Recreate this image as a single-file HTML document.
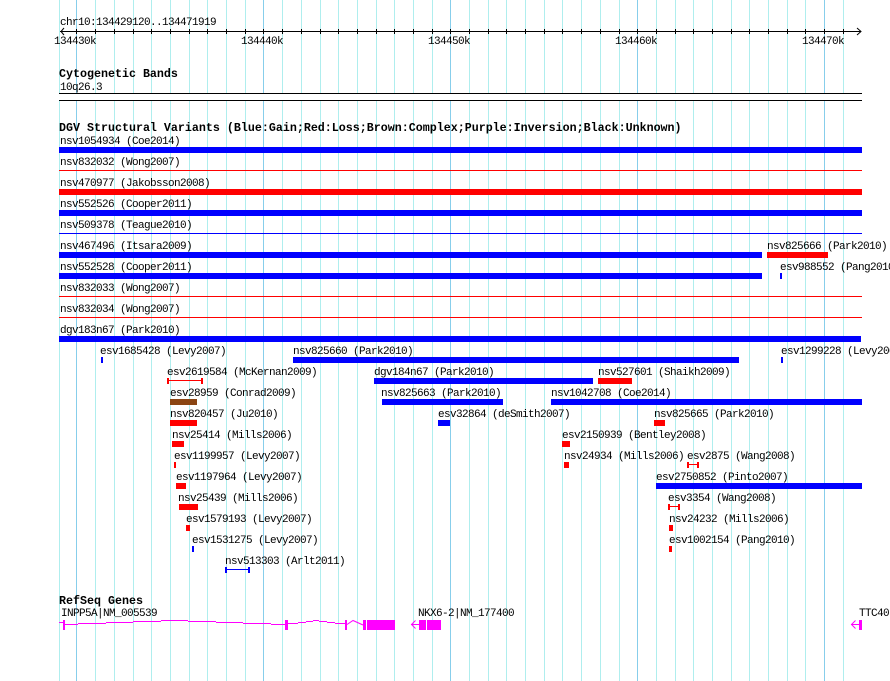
<!DOCTYPE html>
<html><head><meta charset="utf-8"><title>chr10</title>
<style>
html,body{margin:0;padding:0;background:#fff;width:890px;height:681px;overflow:hidden}
svg{display:block;position:absolute;left:0;top:0}
text{font-family:"Liberation Mono",monospace;font-size:11px;letter-spacing:-0.6px;fill:#000;white-space:pre}
text.b{font-weight:bold;font-size:11.67px;letter-spacing:0}
.bl{fill:#0000ff}.rd{fill:#ff0000}.br{fill:#8b4513}.mg{fill:#ff00ff}.k{fill:#000}
</style></head><body>
<svg width="890" height="681" viewBox="0 0 890 681" shape-rendering="crispEdges">
<path stroke="#afeeee" stroke-width="1" fill="none" d="M59.5 0V681M95.5 0V681M114.5 0V681M133.5 0V681M151.5 0V681M170.5 0V681M189.5 0V681M207.5 0V681M226.5 0V681M245.5 0V681M282.5 0V681M301.5 0V681M320.5 0V681M338.5 0V681M357.5 0V681M376.5 0V681M394.5 0V681M413.5 0V681M432.5 0V681M469.5 0V681M488.5 0V681M506.5 0V681M525.5 0V681M544.5 0V681M562.5 0V681M581.5 0V681M600.5 0V681M619.5 0V681M656.5 0V681M675.5 0V681M693.5 0V681M712.5 0V681M731.5 0V681M749.5 0V681M768.5 0V681M787.5 0V681M805.5 0V681M843.5 0V681"/>
<path stroke="#87ceeb" stroke-width="1" fill="none" d="M76.5 0V681M263.5 0V681M450.5 0V681M637.5 0V681M824.5 0V681"/>

<!-- ruler -->
<text x="60" y="25">chr10:134429120..134471919</text>
<path stroke="#000" stroke-width="1" fill="none" d="M60 31.5H861M76.5 29V34M95.5 29V34M114.5 29V34M133.5 29V34M151.5 29V34M170.5 29V34M189.5 29V34M207.5 29V34M226.5 29V34M245.5 29V34M263.5 29V34M282.5 29V34M301.5 29V34M320.5 29V34M338.5 29V34M357.5 29V34M376.5 29V34M394.5 29V34M413.5 29V34M432.5 29V34M450.5 29V34M469.5 29V34M488.5 29V34M506.5 29V34M525.5 29V34M544.5 29V34M562.5 29V34M581.5 29V34M600.5 29V34M619.5 29V34M637.5 29V34M656.5 29V34M675.5 29V34M693.5 29V34M712.5 29V34M731.5 29V34M749.5 29V34M768.5 29V34M787.5 29V34M805.5 29V34M824.5 29V34M843.5 29V34"/>
<path stroke="#000" stroke-width="1" fill="none" shape-rendering="auto" d="M64 28L61 31.5L64 35M857 28L861 31.5L857 35"/>
<text x="54" y="44">134430k</text>
<text x="241" y="44">134440k</text>
<text x="428" y="44">134450k</text>
<text x="615" y="44">134460k</text>
<text x="802" y="44">134470k</text>

<!-- cytobands -->
<text class="b" x="59" y="77">Cytogenetic Bands</text>
<text x="60" y="90">10q26.3</text>
<rect x="59" y="93" width="803" height="8" fill="#fff"/>
<rect class="k" x="59" y="93" width="803" height="1"/>
<rect class="k" x="59" y="100" width="803" height="1"/>

<!-- DGV -->
<text class="b" x="59" y="131">DGV Structural Variants (Blue:Gain;Red:Loss;Brown:Complex;Purple:Inversion;Black:Unknown)</text>

<text x="60" y="144">nsv1054934 (Coe2014)</text>
<rect class="bl" x="59" y="147" width="803" height="6"/>
<text x="60" y="165">nsv832032 (Wong2007)</text>
<rect class="rd" x="59" y="170" width="803" height="1"/>
<text x="60" y="186">nsv470977 (Jakobsson2008)</text>
<rect class="rd" x="59" y="189" width="803" height="6"/>
<text x="60" y="207">nsv552526 (Cooper2011)</text>
<rect class="bl" x="59" y="210" width="803" height="6"/>
<text x="60" y="228">nsv509378 (Teague2010)</text>
<rect class="bl" x="59" y="233" width="803" height="1"/>
<text x="60" y="249">nsv467496 (Itsara2009)</text>
<rect class="bl" x="59" y="252" width="703" height="6"/>
<text x="767" y="249">nsv825666 (Park2010)</text>
<rect class="rd" x="767" y="252" width="61" height="6"/>
<text x="60" y="270">nsv552528 (Cooper2011)</text>
<rect class="bl" x="59" y="273" width="703" height="6"/>
<text x="780" y="270">esv988552 (Pang2010)</text>
<rect class="bl" x="780" y="273" width="2" height="6"/>
<text x="60" y="291">nsv832033 (Wong2007)</text>
<rect class="rd" x="59" y="296" width="803" height="1"/>
<text x="60" y="312">nsv832034 (Wong2007)</text>
<rect class="rd" x="59" y="317" width="803" height="1"/>
<text x="60" y="333">dgv183n67 (Park2010)</text>
<rect class="bl" x="59" y="336" width="802" height="6"/>

<text x="100" y="354">esv1685428 (Levy2007)</text>
<rect class="bl" x="101" y="357" width="2" height="6"/>
<text x="293" y="354">nsv825660 (Park2010)</text>
<rect class="bl" x="293" y="357" width="446" height="6"/>
<text x="781" y="354">esv1299228 (Levy2007)</text>
<rect class="bl" x="781" y="357" width="2" height="6"/>

<text x="167" y="375">esv2619584 (McKernan2009)</text>
<rect class="rd" x="167" y="378" width="2" height="6"/>
<rect class="rd" x="167" y="380" width="36" height="1"/>
<rect class="rd" x="201" y="378" width="2" height="6"/>
<text x="374" y="375">dgv184n67 (Park2010)</text>
<rect class="bl" x="374" y="378" width="219" height="6"/>
<text x="598" y="375">nsv527601 (Shaikh2009)</text>
<rect class="rd" x="598" y="378" width="34" height="6"/>

<text x="170" y="396">esv28959 (Conrad2009)</text>
<rect class="br" x="170" y="399" width="27" height="6"/>
<text x="381" y="396">nsv825663 (Park2010)</text>
<rect class="bl" x="382" y="399" width="121" height="6"/>
<text x="551" y="396">nsv1042708 (Coe2014)</text>
<rect class="bl" x="551" y="399" width="311" height="6"/>

<text x="170" y="417">nsv820457 (Ju2010)</text>
<rect class="rd" x="170" y="420" width="27" height="6"/>
<text x="438" y="417">esv32864 (deSmith2007)</text>
<rect class="bl" x="438" y="420" width="12" height="6"/>
<text x="654" y="417">nsv825665 (Park2010)</text>
<rect class="rd" x="654" y="420" width="11" height="6"/>

<text x="172" y="438">nsv25414 (Mills2006)</text>
<rect class="rd" x="172" y="441" width="12" height="6"/>
<text x="562" y="438">esv2150939 (Bentley2008)</text>
<rect class="rd" x="562" y="441" width="8" height="6"/>

<text x="174" y="459">esv1199957 (Levy2007)</text>
<rect class="rd" x="174" y="462" width="2" height="6"/>
<text x="564" y="459">nsv24934 (Mills2006)</text>
<rect class="rd" x="564" y="462" width="5" height="6"/>
<text x="687" y="459">esv2875 (Wang2008)</text>
<rect class="rd" x="687" y="462" width="2" height="6"/>
<rect class="rd" x="687" y="464" width="12" height="1"/>
<rect class="rd" x="697" y="462" width="2" height="6"/>

<text x="176" y="480">esv1197964 (Levy2007)</text>
<rect class="rd" x="176" y="483" width="10" height="6"/>
<text x="656" y="480">esv2750852 (Pinto2007)</text>
<rect class="bl" x="656" y="483" width="206" height="6"/>

<text x="178" y="501">nsv25439 (Mills2006)</text>
<rect class="rd" x="179" y="504" width="19" height="6"/>
<text x="668" y="501">esv3354 (Wang2008)</text>
<rect class="rd" x="668" y="504" width="2" height="6"/>
<rect class="rd" x="668" y="506" width="12" height="1"/>
<rect class="rd" x="678" y="504" width="2" height="6"/>

<text x="186" y="522">esv1579193 (Levy2007)</text>
<rect class="rd" x="186" y="525" width="4" height="6"/>
<text x="669" y="522">nsv24232 (Mills2006)</text>
<rect class="rd" x="669" y="525" width="4" height="6"/>

<text x="192" y="543">esv1531275 (Levy2007)</text>
<rect class="bl" x="192" y="546" width="2" height="6"/>
<text x="669" y="543">esv1002154 (Pang2010)</text>
<rect class="rd" x="669" y="546" width="3" height="6"/>

<text x="225" y="564">nsv513303 (Arlt2011)</text>
<rect class="bl" x="225" y="567" width="2" height="6"/>
<rect class="bl" x="225" y="569" width="25" height="1"/>
<rect class="bl" x="248" y="567" width="2" height="6"/>

<!-- RefSeq -->
<text class="b" x="59" y="604">RefSeq Genes</text>
<text x="61" y="616">INPP5A|NM_005539</text>
<text x="418" y="616">NKX6-2|NM_177400</text>
<text x="859" y="616">TTC40</text>
<path stroke="#ff00ff" stroke-width="1" fill="none" d="M59 622.5H63M65 624.5H78M78 623.5H106M106 622.5H133M133 621.5H161M161 620.5H188M188 621.5H216M216 622.5H243M243 623.5H271M271 624.5H285M288 623.5H298M298 622.5H306M306 621.5H313M313 620.5H319M319 621.5H327M327 622.5H335M335 623.5H345"/>
<path stroke="#ff00ff" stroke-width="1" fill="none" shape-rendering="auto" d="M347 624.5L353 620.5L363 625"/>
<rect class="mg" x="63" y="620" width="2" height="10"/>
<rect class="mg" x="285" y="620" width="3" height="10"/>
<rect class="mg" x="345" y="620" width="2" height="10"/>
<rect class="mg" x="363" y="620" width="3" height="10"/>
<rect class="mg" x="367" y="620" width="28" height="10"/>
<path stroke="#ff00ff" stroke-width="1" fill="none" d="M411 624.5H419"/>
<path stroke="#ff00ff" stroke-width="1" fill="none" shape-rendering="auto" d="M415.5 620.5L411.5 624.5L415.5 628.5"/>
<rect class="mg" x="419" y="620" width="7" height="10"/>
<rect class="mg" x="427" y="620" width="14" height="10"/>
<path stroke="#ff00ff" stroke-width="1" fill="none" d="M851 624.5H859"/>
<path stroke="#ff00ff" stroke-width="1" fill="none" shape-rendering="auto" d="M855.5 620.5L851.5 624.5L855.5 628.5"/>
<rect class="mg" x="859" y="620" width="3" height="10"/>
</svg>
</body></html>
